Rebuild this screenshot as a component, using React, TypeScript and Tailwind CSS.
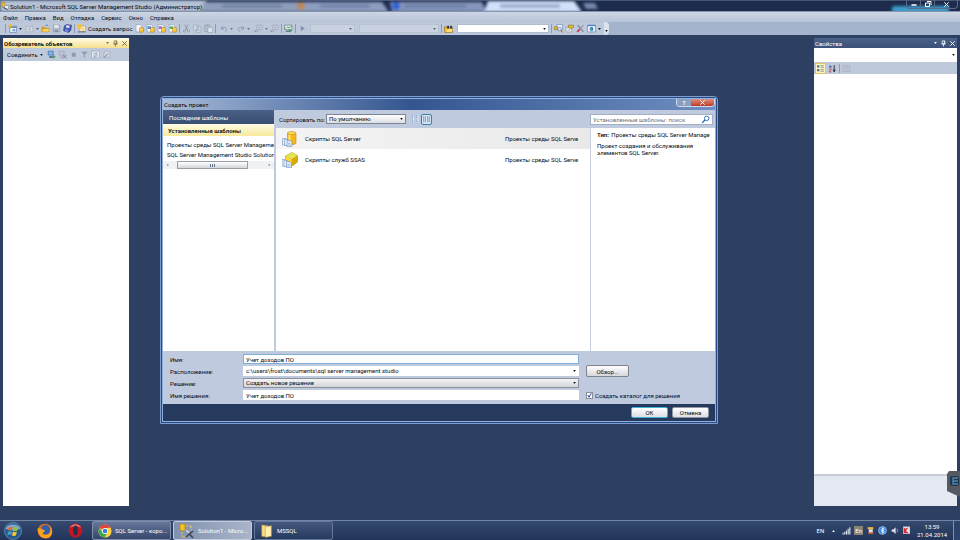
import React from 'react';
import clsx from 'clsx';

type IconProps = { children: React.ReactNode; className?: string };

const Icon = ({ children, className = 'size-[9px]' }: IconProps) => (
  <svg viewBox="0 0 16 16" className={clsx('shrink-0', className)} aria-hidden="true">
    {children}
  </svg>
);

const Caret = ({ className = 'text-slate-900' }: { className?: string }) => (
  <svg viewBox="0 0 4 3" className={clsx('h-[2px] w-[3px] shrink-0 fill-current', className)} aria-hidden="true">
    <path d="M0 0h4L2 3z" />
  </svg>
);

const ToolButton = ({ label, children, className }: { label: string; children: React.ReactNode; className?: string }) => (
  <button type="button" aria-label={label} className={clsx('flex shrink-0 items-center gap-[2px]', className)}>
    {children}
  </button>
);

const Separator = () => <span className="h-[9px] w-px shrink-0 bg-[#8d9ab2]" />;

const NewProject = () => (
  <Icon>
    <path d="M3 4h12v11H3z" fill="#e9f1fa" stroke="#4a6fa5" />
    <path d="M3 4h12v3H3z" fill="#5b88c4" />
    <path d="M4 0v8M0 4h8" stroke="#f0b429" strokeWidth="2" />
    <path d="M8 9h5v4H8z" fill="#7fa6d6" />
  </Icon>
);

const AddItem = () => (
  <Icon>
    <path d="M2 4h12v10H2z" fill="#d3dae5" stroke="#9aa5b6" />
    <path d="M5 7h6M5 10h6M8 5v8" stroke="#a8b2c2" />
  </Icon>
);

const FolderOpen = () => (
  <Icon>
    <path d="M1 5h5l2 2h5v7H1z" fill="#d89b1c" />
    <path d="M4 8h12l-3 6H1z" fill="#ffd45e" stroke="#a87511" strokeWidth=".8" />
    <path d="M8 3c2-2 4-1 5 1" fill="none" stroke="#3b69b2" strokeWidth="1.5" />
  </Icon>
);

const Floppy = () => (
  <Icon>
    <path d="M2 2h12v12H2z" fill="#b3bdcc" stroke="#8793a6" />
    <path d="M4 2h8v5H4z" fill="#e2e7ee" />
    <path d="M5 10h6v4H5z" fill="#8793a6" />
  </Icon>
);

const FloppyStack = () => (
  <Icon>
    <path d="M6 1l9 1-1 9-4 4-9-3 1-8z" fill="#4658b8" stroke="#27357f" />
    <path d="M6 2l6 1-1 4-6-1z" fill="#dfe5fa" />
    <path d="M4 9l5 1-1 4-4-1z" fill="#8694dc" />
  </Icon>
);

const QuerySheet = () => (
  <Icon>
    <path d="M5 4h10v9H5z" fill="#fff8d0" stroke="#c59a24" />
    <path d="M1 1c0-1 7-1 7 0v7c0 1-7 1-7 0z" fill="#f4c136" />
    <path d="M1 14h14" stroke="#6b7487" strokeWidth="2" />
    <path d="M9 8h4M9 11h4" stroke="#b79841" />
  </Icon>
);

const SqlDoc = ({ tint }: { tint: string }) => (
  <Icon>
    <path d="M2 1h7l3 3v10H2z" fill="#f7f9fd" stroke="#8190ab" />
    <path d="M3 4h6v5H3z" fill={tint} />
    <path d="M8 7c0-1 7-1 7 0v7c0 1-7 1-7 0z" fill="#f3c235" stroke="#a77912" strokeWidth=".8" />
    <path d="M9 9h5" stroke="#fff0aa" />
  </Icon>
);

const Scissors = () => (
  <Icon>
    <path d="M5 1l5 10M11 1L6 11" stroke="#7d899b" strokeWidth="1.3" />
    <circle cx="4.5" cy="12.5" r="2" fill="none" stroke="#7d899b" />
    <circle cx="11.5" cy="12.5" r="2" fill="none" stroke="#7d899b" />
  </Icon>
);

const CopyDocs = () => (
  <Icon>
    <path d="M1 2h8v9H1zM6 5h8v10H6z" fill="#d5dce7" stroke="#8f9bad" />
    <path d="M8 9h4M8 12h4" stroke="#8f9bad" />
  </Icon>
);

const PasteDocs = () => (
  <Icon>
    <path d="M1 2h10v11H1z" fill="#b4becd" stroke="#8f9bad" />
    <path d="M4 1h4v2H4z" fill="#8f9bad" />
    <path d="M7 6h8v9H7z" fill="#dfe5ee" stroke="#8f9bad" />
  </Icon>
);

const Undo = ({ flip = false }: { flip?: boolean }) => (
  <Icon className={clsx('size-2', flip && '-scale-x-100')}>
    <path d="M3 3v5h5M3 8c3-6 10-4 10 1 0 2-2 4-4 5" fill="none" stroke="#8793a7" strokeWidth="1.7" />
  </Icon>
);

const NavDoc = () => (
  <Icon>
    <path d="M5 2h9v8H5z" fill="#d5dce7" stroke="#8793a7" />
    <path d="M7 5h5M7 7h5M8 13H1m3-3l-3 3 3 2" fill="none" stroke="#8793a7" strokeWidth="1.2" />
  </Icon>
);

const Monitor = () => (
  <Icon>
    <path d="M1 2h13v8H1z" fill="#e5f2e9" stroke="#4b5d74" />
    <path d="M3 8l3-3 3 2 4-3" fill="none" stroke="#2d9b48" strokeWidth="1.5" />
    <path d="M3 12h8v2H3z" fill="#596a80" />
    <path d="M9 9l6 3-6 3z" fill="#35a147" />
  </Icon>
);

const FindFolder = () => (
  <Icon>
    <path d="M1 5h5l1 2h8v8H1z" fill="#f1bc39" stroke="#8b640f" />
    <path d="M6 3h3v5H5zM11 3h3l1 5h-4z" fill="#303744" />
    <path d="M4 14l3-5h9l-3 5z" fill="#ffdd78" />
  </Icon>
);

const ServerSearch = () => (
  <Icon>
    <path d="M5 1h10v9H5z" fill="#e8f2ff" stroke="#5e7fb2" />
    <path d="M1 5h6v5H1z" fill="#edb52d" stroke="#a07516" />
    <circle cx="10" cy="9" r="3" fill="#d8ecff" stroke="#557099" />
    <path d="M12 11l3 4" stroke="#a97625" strokeWidth="2" />
  </Icon>
);

const HandSheet = () => (
  <Icon>
    <path d="M2 6h9v8H2z" fill="#fff" stroke="#77849b" />
    <path d="M4 9h5M4 11h5" stroke="#77849b" />
    <path d="M6 2h9v4l-5 2-4-2z" fill="#efb92e" stroke="#8a650d" />
  </Icon>
);

const Tools = () => (
  <Icon>
    <path d="M3 2l10 12" stroke="#77849b" strokeWidth="2" />
    <path d="M13 2L7 9" stroke="#8d98aa" strokeWidth="2" />
    <path d="M7 9l-5 5" stroke="#cf3940" strokeWidth="3" />
  </Icon>
);

const WebWindow = () => (
  <Icon>
    <path d="M1 2h14v12H1z" fill="#f5fbff" stroke="#456ca6" />
    <path d="M1 2h14v2H1z" fill="#4b7fc8" />
    <circle cx="8" cy="9" r="3.5" fill="#2f7cc7" />
    <path d="M6 8h3v3H7z" fill="#6bc157" />
  </Icon>
);

const Pin = () => (
  <Icon className="size-[7px]">
    <path d="M5 2h6v7H5zM3 9h10M8 9v6M10 2v7" fill="none" stroke="currentColor" strokeWidth="1.7" />
  </Icon>
);

const Close = ({ className = 'size-[7px]' }: { className?: string }) => (
  <Icon className={className}>
    <path d="M3 3l10 10M13 3L3 13" stroke="currentColor" strokeWidth="2.2" />
  </Icon>
);

const Plug = ({ muted = false }: { muted?: boolean }) => (
  <Icon>
    <path d="M2 2h9v7H2z" fill={muted ? '#bdc6d4' : '#7fb2e8'} stroke={muted ? '#919cad' : '#315e9a'} />
    <path d="M4 11h6v3H4z" fill={muted ? '#a5afbf' : '#4b638b'} />
    <path d={muted ? 'M9 9l6 6M15 9l-6 6' : 'M9 12h6M12 9v6'} stroke={muted ? '#8a95a6' : '#2f9b45'} strokeWidth="1.8" />
  </Icon>
);

const Magnifier = () => (
  <Icon>
    <circle cx="10" cy="6" r="4" fill="none" stroke="#2369ae" strokeWidth="1.6" />
    <path d="M7 9l-5 5" stroke="#2369ae" strokeWidth="2.2" />
  </Icon>
);

const CylinderScript = () => (
  <svg viewBox="0 0 32 32" className="size-4 shrink-0" aria-hidden="true">
    <path d="M11 4v20c0 4 17 4 17 0V4z" fill="#f5b816" stroke="#b57808" />
    <path d="M15 7v20" stroke="#ffe37b" strokeWidth="4" />
    <ellipse cx="19.5" cy="4" rx="8.5" ry="3" fill="#ffdf62" stroke="#b57808" />
    <path d="M1 15h7l3 3v10H1z" fill="#e4eefc" stroke="#5f82b5" />
    <path d="M5 17h7l3 3v9H5z" fill="#e4eefc" stroke="#5f82b5" />
    <path d="M10 19h7l3 3v9H10z" fill="#dfeaff" stroke="#5879ad" />
    <path d="M12 25h5M12 28h6" stroke="#7b98c5" />
  </svg>
);

const CubeScript = () => (
  <svg viewBox="0 0 32 32" className="size-4 shrink-0" aria-hidden="true">
    <path d="M7 8l13-7 11 6v13l-12 9-12-8z" fill="#d9a909" stroke="#9c790b" />
    <path d="M7 8l13-7 11 6-12 7z" fill="#e2e652" />
    <path d="M7 8l12 6v14L7 21z" fill="#ffd837" />
    <path d="M0 15h7l3 3v10H0z" fill="#e4eefc" stroke="#5f82b5" />
    <path d="M4 17h7l3 3v9H4z" fill="#e4eefc" stroke="#5f82b5" />
    <path d="M9 19h7l3 3v9H9z" fill="#dfeaff" stroke="#5879ad" />
    <path d="M11 25h5M11 28h6" stroke="#7b98c5" />
  </svg>
);

const Combo = ({ label, value, className, id }: { label?: string; value: string; className?: string; id?: string }) => (
  <span className={clsx('grid shrink-0 items-center', className)}>
    <select
      id={id}
      aria-label={label}
      className="col-start-1 row-start-1 h-full w-full min-w-0 appearance-none bg-transparent px-[2px] leading-[8px] outline-none"
    >
      <option>{value}</option>
    </select>
    <span className="pointer-events-none col-start-1 row-start-1 mr-[2px] flex justify-self-end">
      <Caret />
    </span>
  </span>
);

const TitleBar = () => (
  <header className="relative flex h-3 items-center overflow-hidden bg-[#1d2b4d]">
    <svg viewBox="0 0 960 12" preserveAspectRatio="none" className="absolute inset-0 size-full" aria-hidden="true">
      <defs>
        <filter id="glass" x="-5%" y="-50%" width="110%" height="200%">
          <feGaussianBlur stdDeviation="1.6" />
        </filter>
      </defs>
      <g filter="url(#glass)">
        <path d="M0 0h206v12H0z" fill="#b4c1d5" />
        <path d="M204 2h100l6 10H200z" fill="#8e9dba" />
        <path d="M302 2h80l7 10h-80z" fill="#8d9dbf" />
        <path d="M390 2h92l4 10h-94z" fill="#8696bb" />
        <path d="M488 1h86l8 11h-98z" fill="#d3e0f9" />
        <path d="M222 6h60M320 6h50M404 6h62M500 6h60" stroke="#53678f" strokeWidth="3" opacity=".55" />
        <circle cx="301" cy="6" r="4" fill="#b98a55" />
        <circle cx="396" cy="6" r="4" fill="#2e62d8" />
        <path d="M583 3h12l3 6h-12z" fill="#7588aa" />
        <path d="M893 6h56v7h-58z" fill="#3d9cc9" />
      </g>
      <path d="M0 11.5h960" stroke="#8595ad" />
      <path d="M0 .5h960" stroke="#65738e" strokeWidth=".6" />
    </svg>
    <Icon className="relative ml-px size-2">
      <path d="M2 1h6v9H2z" fill="#edc33c" stroke="#9c7921" />
      <path d="M7 7h8v7H7z" fill="#e8edf5" stroke="#6c7a92" />
      <path d="M5 11l8 4" stroke="#3f5270" strokeWidth="2" />
    </Icon>
    <h1 className="relative ml-px whitespace-nowrap text-black">
      Solution1 - Microsoft SQL Server Management Studio (Администратор)
    </h1>
    <div className="relative mr-[2px] ml-auto flex h-[9px] self-start rounded-b-sm border border-t-0 border-[#5c6a86] text-white">
      <button type="button" aria-label="Свернуть" className="flex w-3.5 items-center justify-center border-r border-[#5c6a86]">
        <Icon className="size-2"><path d="M3 10h10" stroke="#fff" strokeWidth="3" /></Icon>
      </button>
      <button type="button" aria-label="Восстановить" className="flex w-3.5 items-center justify-center border-r border-[#5c6a86]">
        <Icon className="size-2"><path d="M6 3h8v7M3 6h8v7H3z" fill="none" stroke="#fff" strokeWidth="2" /></Icon>
      </button>
      <button type="button" aria-label="Закрыть" className="flex w-[22px] items-center justify-center">
        <Close />
      </button>
    </div>
  </header>
);

const menu = ['Файл', 'Правка', 'Вид', 'Отладка', 'Сервис', 'Окно', 'Справка'];

const Toolbar = () => (
  <div className="flex h-[13px] bg-[#a5b4cd]">
    <div className="flex items-center gap-[2px] rounded-r-sm bg-[#bdc8db] pl-[5px]">
      <Separator />
      <ToolButton label="Создать проект"><NewProject /><Caret /></ToolButton>
      <ToolButton label="Добавить элемент" className="ml-px"><AddItem /><Caret className="text-slate-600" /></ToolButton>
      <ToolButton label="Открыть"><FolderOpen /></ToolButton>
      <ToolButton label="Сохранить"><Floppy /></ToolButton>
      <ToolButton label="Сохранить все"><FloppyStack /></ToolButton>
      <Separator />
      <button type="button" className="flex w-14 shrink-0 items-center gap-[2px] whitespace-nowrap">
        <QuerySheet />
        Создать запрос
      </button>
      <ToolButton label="Запрос ядра"><SqlDoc tint="#f7f9fd" /></ToolButton>
      <ToolButton label="Запрос MDX"><SqlDoc tint="#4c8bd6" /></ToolButton>
      <ToolButton label="Запрос DMX"><SqlDoc tint="#b06bc9" /></ToolButton>
      <ToolButton label="Запрос XMLA"><SqlDoc tint="#5bb06f" /></ToolButton>
      <Separator />
      <ToolButton label="Вырезать"><Scissors /></ToolButton>
      <ToolButton label="Копировать"><CopyDocs /></ToolButton>
      <ToolButton label="Вставить"><PasteDocs /></ToolButton>
      <Separator />
      <ToolButton label="Отменить" className="ml-[2px]"><Undo /><Caret className="text-slate-500" /></ToolButton>
      <ToolButton label="Повторить" className="ml-[2px]"><Undo flip /><Caret className="text-slate-500" /></ToolButton>
      <ToolButton label="Назад" className="ml-[2px]"><NavDoc /><Caret className="text-slate-500" /></ToolButton>
      <ToolButton label="Вперед"><NavDoc /></ToolButton>
      <Separator />
      <ToolButton label="Монитор активности"><Monitor /></ToolButton>
      <Separator />
      <ToolButton label="Запуск">
        <Icon><path d="M5 3l7 5-7 5z" fill="#8290a6" /></Icon>
      </ToolButton>
      <Combo label="Конфигурация" value="" className="ml-px h-[9px] w-[45px] border border-[#b2bfd1] bg-[#d2dae6] opacity-60" />
      <Combo label="Платформа" value="" className="ml-[2px] h-[9px] w-20 border border-[#b2bfd1] bg-[#d2dae6] opacity-60" />
      <Separator />
      <ToolButton label="Найти в файлах"><FindFolder /></ToolButton>
      <Combo label="Найти" value="" className="ml-[2px] h-[9px] w-[92px] border border-[#b0bccf] bg-white" />
      <Separator />
      <ToolButton label="Зарегистрированные серверы"><ServerSearch /></ToolButton>
      <ToolButton label="Окно свойств"><HandSheet /></ToolButton>
      <ToolButton label="Панель элементов"><Tools /></ToolButton>
      <ToolButton label="Веб-браузер"><WebWindow /><Caret /></ToolButton>
      <button type="button" aria-label="Параметры панели" className="ml-px flex h-full w-[5px] items-end justify-center rounded-r-sm bg-[#dbe2ee] pb-[3px]">
        <Caret />
      </button>
    </div>
  </div>
);

const ObjectExplorer = () => (
  <section className="flex w-[126px] shrink-0 flex-col bg-white">
    <div className="flex h-[10px] items-center gap-[2px] bg-linear-to-b from-[#fffbe2] to-[#f5e08c] pr-px pl-px text-[#75683e]">
      <h2 className="mr-auto font-semibold text-black">Обозреватель объектов</h2>
      <Caret className="mr-px" />
      <button type="button" aria-label="Закрепить"><Pin /></button>
      <button type="button" aria-label="Закрыть панель"><Close /></button>
    </div>
    <div className="flex h-[13px] items-center gap-[2px] bg-[#bfc9dc] pl-1">
      <button type="button" className="mr-[2px] flex items-center gap-[2px]">Соединить <Caret /></button>
      <ToolButton label="Подключить"><Plug /></ToolButton>
      <ToolButton label="Отключить"><Plug muted /></ToolButton>
      <ToolButton label="Остановить"><Icon><path d="M5 5h7v7H5z" fill="#8f9aac" /></Icon></ToolButton>
      <ToolButton label="Фильтр"><Icon><path d="M2 3h12L9 8v6l-2-2V8z" fill="#8f9aac" /></Icon></ToolButton>
      <ToolButton label="Обновить">
        <Icon>
          <path d="M1 2h14v12H1z" fill="#e7ebf2" stroke="#8f9aac" />
          <path d="M5 8V6h6M8 4l3 2-3 2M11 8v3H5m3-2l-3 2 3 2" fill="none" stroke="#7b8798" />
        </Icon>
      </ToolButton>
      <ToolButton label="Сценарий">
        <Icon>
          <path d="M5 2h9v11H3V8z" fill="#d2d9e4" stroke="#98a3b4" />
          <path d="M3 14l8-8" stroke="#8f9aac" strokeWidth="2" />
        </Icon>
      </ToolButton>
    </div>
  </section>
);

const Properties = () => (
  <section className="flex w-[143px] shrink-0 flex-col bg-white">
    <div className="flex h-[10px] items-center gap-[2px] bg-linear-to-b from-[#4d6288] to-[#3c5179] pr-px pl-px text-white">
      <h2 className="mr-auto">Свойства</h2>
      <Caret className="mr-px text-white" />
      <button type="button" aria-label="Закрепить свойства"><Pin /></button>
      <button type="button" aria-label="Закрыть свойства"><Close /></button>
    </div>
    <Combo label="Объект" value="" className="h-[14px] w-full bg-white" />
    <div className="flex h-3 items-center gap-[2px] bg-[#bfc9dc] pl-px">
      <button type="button" aria-label="По категориям" className="border border-[#e5c365] bg-[#fdf4bf]">
        <Icon>
          <path d="M2 2h4v4H2zM2 9h4v4H2z" fill="#4d6b9b" />
          <path d="M8 3h6M8 6h6M8 10h6M8 13h6" stroke="#4d5a70" />
        </Icon>
      </button>
      <ToolButton label="По алфавиту">
        <Icon>
          <path d="M2 7l2-5 2 5M3 5h3" fill="none" stroke="#2e5cb8" strokeWidth="1.3" />
          <path d="M2 9h4l-4 5h4" fill="none" stroke="#b83434" strokeWidth="1.3" />
          <path d="M11 2v11M9 10l2 4 2-4" fill="none" stroke="#222" strokeWidth="1.6" />
        </Icon>
      </ToolButton>
      <Separator />
      <ToolButton label="Страницы свойств">
        <Icon>
          <path d="M2 3h12v10H2z" fill="#c2cad7" stroke="#9ba6b7" />
          <path d="M5 6h6M5 9h6" stroke="#9ba6b7" />
        </Icon>
      </ToolButton>
    </div>
    <div className="flex-1" />
    <div className="h-8 border-t-2 border-[#c6cbd5] bg-[#e4e8f0]" />
  </section>
);

const templates = [
  { name: 'Скрипты SQL Server', icon: <CylinderScript />, selected: true },
  { name: 'Скрипты служб SSAS', icon: <CubeScript />, selected: false },
];

const inputClass = 'h-[10px] w-full min-w-0 border bg-white px-[2px] outline-none';

const NewProjectDialog = () => (
  <div
    role="dialog"
    aria-labelledby="dialog-title"
    className="absolute top-24 left-1/6 w-[558px] rounded-t-sm border border-[#7f9dcb] bg-[#27498a] p-px"
  >
    <div className="border border-[#8fafdc]">
      <div className="flex h-[11px] items-center bg-linear-to-r from-[#a9bcd9] via-[#34558f] via-45% to-[#6f8fc2] pl-px">
        <h2 id="dialog-title" className="text-black">Создать проект</h2>
        <div className="ml-auto flex h-2 self-start overflow-hidden rounded-b-sm border border-t-0 border-[#d3dced] text-white">
          <button type="button" aria-label="Справка" className="w-[14px] bg-[#8a9fc2] leading-[7px] font-bold">?</button>
          <button type="button" aria-label="Закрыть окно" className="flex w-[23px] items-center justify-center bg-linear-to-b from-[#dd8f83] to-[#bd3524]">
            <Close />
          </button>
        </div>
      </div>

      <div className="flex h-[241px] bg-[#bfcadf]">
        <nav className="w-[111px] shrink-0 overflow-hidden bg-white whitespace-nowrap">
          <button type="button" className="block h-[14px] w-full bg-linear-to-b from-[#4b6087] to-[#3a4d73] pl-[6px] text-left text-white">
            Последние шаблоны
          </button>
          <button type="button" className="block h-3 w-full bg-linear-to-b from-[#fffbe4] to-[#f8e99b] pl-[5px] text-left font-semibold">
            Установленные шаблоны
          </button>
          <div className="mt-[3px] flex flex-col pl-1">
            <button type="button" className="h-[10px] text-left">Проекты среды SQL Server Managemen</button>
            <button type="button" className="h-[10px] text-left">SQL Server Management Studio Solution</button>
          </div>
          <div className="mt-[2px] flex h-2 items-center justify-between bg-[#f0f1f4] px-[3px]">
            <span className="flex rotate-90"><Caret className="text-slate-500" /></span>
            <span className="mr-auto ml-2 flex h-2 w-[71px] items-center justify-center gap-px border border-[#9b9ea5] bg-linear-to-b from-white to-[#d5d7dc]">
              <i className="h-[3px] w-px bg-slate-500" />
              <i className="h-[3px] w-px bg-slate-500" />
              <i className="h-[3px] w-px bg-slate-500" />
            </span>
            <span className="flex -rotate-90"><Caret className="text-slate-500" /></span>
          </div>
        </nav>

        <div className="flex min-w-0 flex-1 flex-col pl-[2px]">
          <div className="flex h-[18px] shrink-0 items-center pr-[2px] pl-[3px]">
            <label htmlFor="sort" className="w-[47px] whitespace-nowrap">Сортировать по:</label>
            <Combo id="sort" value="По умолчанию" className="h-[10px] w-20 border border-[#7d8594] bg-linear-to-b from-white to-[#dcdee3]" />
            <button type="button" aria-label="Мелкие значки" className="ml-1">
              <Icon className="size-[10px]">
                <path d="M4 2v5M7 2v5M11 2v5M14 2v5M4 9v4M7 9v4M11 9v4M14 9v4" stroke="#8fa5cd" strokeWidth="1.3" />
                <path d="M5 2h2v11H5zM12 2h2v11h-2z" fill="#dfe7f5" />
              </Icon>
            </button>
            <button type="button" aria-label="Средние значки" className="ml-px rounded-xs border border-[#3d7fa3] bg-[#d7e6f5]">
              <Icon className="size-[9px]">
                <path d="M3 2v11M6 2v11M10 2v11M13 2v11" stroke="#6f8fd0" strokeWidth="1.5" />
              </Icon>
            </button>
            <div className="ml-auto flex h-[11px] w-[123px] items-center border border-[#a2afc4] bg-white pr-[2px]">
              <input
                aria-label="Поиск шаблонов"
                placeholder="Установленные шаблоны: поиск"
                className="min-w-0 flex-1 px-[2px] outline-none placeholder:text-[#6e7480]"
              />
              <Magnifier />
            </div>
          </div>

          <div className="flex min-h-0 flex-1 bg-white">
            <ul className="flex-1">
              {templates.map(t => (
                <li key={t.name}>
                  <button
                    type="button"
                    className={clsx(
                      'flex h-[21px] w-full items-center pr-3 pl-[6px]',
                      t.selected && 'bg-linear-to-r from-[#f4f4f4] to-[#e9e9e9]'
                    )}
                  >
                    {t.icon}
                    <span className="ml-[7px]">{t.name}</span>
                    <span className="ml-auto w-[73px] text-left whitespace-nowrap">Проекты среды SQL Serve</span>
                  </button>
                </li>
              ))}
            </ul>
            <div className="w-[125px] shrink-0 border-l border-[#c6cddc] pt-[2px] pl-[6px]">
              <p className="leading-[9px] whitespace-nowrap">
                <b className="mr-px font-semibold">Тип:</b> Проекты среды SQL Server Manage
              </p>
              <p className="mt-[3px] w-[105px] leading-[7px]">Проект создания и обслуживания элементов SQL Server.</p>
            </div>
          </div>
        </div>
      </div>

      <form className="grid grid-cols-[73px_336px_1fr] items-center gap-y-[2px] bg-[#bfcadf] pt-[3px] pb-1 pl-[7px]">
        <label htmlFor="name">Имя:</label>
        <input id="name" defaultValue="Учет доходов ПО" className={clsx(inputClass, 'border-[#7eb0d8]')} />
        <span />
        <label htmlFor="location">Расположение:</label>
        <Combo id="location" value="c:\users\frost\documents\sql server management studio" className="h-[10px] w-full border border-white bg-white" />
        <button type="button" className="-my-px ml-[7px] h-3 w-[43px] rounded-xs border border-[#7c818b] bg-linear-to-b from-white to-[#d5d7dc]">
          Обзор...
        </button>
        <label htmlFor="solution">Решение:</label>
        <Combo id="solution" value="Создать новое решение" className="h-[10px] w-full border border-[#8c929d] bg-linear-to-b from-[#f4f4f5] to-[#d3d5d9]" />
        <span />
        <label htmlFor="solution-name">Имя решения:</label>
        <input id="solution-name" defaultValue="Учет доходов ПО" className={clsx(inputClass, 'border-white')} />
        <label className="ml-[7px] flex items-center gap-[2px] whitespace-nowrap">
          <span className="grid">
            <input type="checkbox" defaultChecked className="peer col-start-1 row-start-1 size-[7px] appearance-none border border-[#8890a0] bg-white" />
            <Icon className="pointer-events-none invisible col-start-1 row-start-1 size-[7px] peer-checked:visible">
              <path d="M4 7l3 5 5-9" fill="none" stroke="#22398f" strokeWidth="2.2" />
            </Icon>
          </span>
          Создать каталог для решения
        </label>
      </form>

      <div className="flex h-[17px] items-center justify-end gap-1 bg-[#263a5e] pr-[6px]">
        <button type="button" className="h-[11px] w-[37px] rounded-xs border border-[#3fb3d3] bg-linear-to-b from-white to-[#dcdfe4]">ОК</button>
        <button type="button" className="h-[11px] w-[37px] rounded-xs border border-[#9196a0] bg-linear-to-b from-white to-[#dcdfe4]">Отмена</button>
      </div>
    </div>
  </div>
);

const StartOrb = () => (
  <svg viewBox="0 0 32 32" className="size-[18px]" aria-hidden="true">
    <circle cx="16" cy="16" r="15" fill="#245a8c" stroke="#8ab4d3" />
    <path d="M3 12C6 2 26 2 29 12 20 16 12 16 3 12z" fill="#a8c9df" opacity=".7" />
    <path d="M8 10c3-2 5-2 7-1l-1 6c-2-1-5-1-7 1z" fill="#ef6a32" />
    <path d="M17 9c3 1 5 1 8 0l-2 7c-3 1-5 0-7-1z" fill="#8bc53f" />
    <path d="M7 18c2-2 5-2 7-1l-1 6c-2-1-5-1-7 1z" fill="#3fa2e3" />
    <path d="M16 17c2 1 4 2 7 1l-2 6c-2 1-5 1-7 0z" fill="#fcc72e" />
  </svg>
);

const Firefox = () => (
  <Icon className="size-4">
    <circle cx="8" cy="8" r="7.3" fill="#e66a17" />
    <circle cx="8.5" cy="6.8" r="4.8" fill="#2e5fae" />
    <path d="M1 5c2 1 3 0 4 1s3 1 3 2-3 1-2 3c2 2 6 1 7-2 1-2 0-4-1-6 4 3 4 8 1 11-4 3-9 1-11-3C1 9 0 7 1 5z" fill="#f9a11f" />
  </Icon>
);

const Opera = () => (
  <Icon className="size-[15px]">
    <ellipse cx="8" cy="8" rx="7.2" ry="7.6" fill="#c91420" />
    <path d="M2 5C4 0 12 0 14 5 10 3 6 3 2 5z" fill="#ef7a78" />
    <ellipse cx="8" cy="8" rx="2.5" ry="5.3" fill="#25304c" />
  </Icon>
);

const Chrome = () => (
  <Icon className="size-[14px]">
    <circle cx="8" cy="8" r="7.5" fill="#ffd23d" />
    <path d="M8 8L1.5 4.2A7.5 7.5 0 0 1 14.6 4.4L8 4.5z" fill="#dd4338" />
    <path d="M1.5 4.2A7.5 7.5 0 0 0 7.5 15.5L11 9.5 8 11.5 5 9.5z" fill="#3aa757" />
    <circle cx="8" cy="8" r="3.5" fill="#fff" />
    <circle cx="8" cy="8" r="2.7" fill="#3b7ddd" />
  </Icon>
);

const Studio = () => (
  <Icon className="size-4">
    <path d="M1 1v6c0 1 5 1 5 0V1z" fill="#f0c02d" stroke="#a67c14" strokeWidth=".5" />
    <path d="M7 3h5M12 3v4M3 9v5h3" fill="none" stroke="#e9c74c" strokeWidth="1" strokeDasharray="2 1" />
    <path d="M7 7l7 8M14 8l-7 6" stroke="#3d4857" strokeWidth="1.6" />
    <path d="M7 7l3 3" stroke="#e6eaf0" strokeWidth="1.5" />
  </Icon>
);

const FolderIcon = () => (
  <Icon className="size-[14px]">
    <path d="M2 1l7 1v13l-7-1z" fill="#f6dc86" stroke="#b5913a" strokeWidth=".6" />
    <path d="M6 3l7-1v12l-7 1z" fill="#ffeeb0" stroke="#b5913a" strokeWidth=".6" />
  </Icon>
);

const tasks = [
  { title: 'SQL Server - коро...', icon: <Chrome />, style: 'border-[#7f8dab] bg-linear-to-b from-[#66779a] to-[#35476c]' },
  { title: 'Solution1 - Micro...', icon: <Studio />, style: 'border-[#c2cbdc] bg-linear-to-r from-[#8190ae] to-[#aab5cb]' },
  { title: 'MSSQL', icon: <FolderIcon />, style: 'border-[#68789a] bg-linear-to-b from-[#44577c] to-[#273a60]' },
];

const Taskbar = () => (
  <footer className="flex h-5 shrink-0 items-center border-t border-[#7284a5] bg-linear-to-b from-[#354a70] to-[#22345a] text-white">
    <button type="button" aria-label="Пуск" className="ml-1"><StartOrb /></button>
    <button type="button" aria-label="Firefox" className="ml-[15px]"><Firefox /></button>
    <button type="button" aria-label="Opera" className="ml-[15px]"><Opera /></button>
    <div className="ml-[9px] flex gap-[2px]">
      {tasks.map(task => (
        <button
          key={task.title}
          type="button"
          className={clsx('flex h-[19px] w-[79px] items-center gap-[3px] rounded-xs border pl-[5px] whitespace-nowrap', task.style)}
        >
          {task.icon}
          {task.title}
        </button>
      ))}
    </div>
    <div className="ml-auto flex items-center gap-[3px]">
      <span className="mr-[5px]">EN</span>
      <button type="button" aria-label="Скрытые значки" className="mr-1 flex rotate-180"><Caret className="text-white" /></button>
      <Icon><path d="M2 15v-3M5 15v-5M8 15V8M11 15V5M14 15V2" stroke="#dfe5ef" strokeWidth="2" /></Icon>
      <span className="flex h-[9px] items-center bg-[#8a8474] px-px">En</span>
      <Icon>
        <path d="M3 2h10v4H3z" fill="#f0b53c" />
        <path d="M5 6h7v6H5z" fill="#dfe6f2" />
        <path d="M4 11h9v3H4z" fill="#db6c32" />
      </Icon>
      <Icon>
        <circle cx="8" cy="8" r="7" fill="#2e86e0" stroke="#d4e8ff" />
        <path d="M8 3v10l3-3-6-4M8 3l3 3-6 4" fill="none" stroke="#fff" strokeWidth="1.4" />
      </Icon>
      <Icon>
        <path d="M3 6h3l4-4v12l-4-4H3z" fill="#dfe5ef" />
        <path d="M12 5c2 2 2 4 0 6" fill="none" stroke="#dfe5ef" />
      </Icon>
      <Icon>
        <path d="M2 1h12v13H2z" fill="#ece9ee" />
        <path d="M3 2l3 3 6-3-5 7 6 4H3z" fill="#d82d32" />
      </Icon>
    </div>
    <time className="mx-[6px] w-[30px] text-center leading-2">13:59<br />21.04.2014</time>
    <button type="button" aria-label="Свернуть все окна" className="h-full w-[7px] border-l border-[#7f91b2] bg-[#2f446c]" />
  </footer>
);

export default function App() {
  return (
    <div className="relative flex min-h-screen flex-col overflow-hidden bg-[#2e4062] font-[Roboto,'Noto_Sans',sans-serif] text-[6px] leading-[9px] text-[#080a10]">
      <TitleBar />
      <nav className="flex h-[10px] items-center gap-[7px] bg-linear-to-b from-[#ccd5e4] to-[#b7c3d8] pl-[3px]">
        {menu.map(item => (
          <button key={item} type="button">{item}</button>
        ))}
      </nav>
      <Toolbar />
      <main className="mb-[14px] flex flex-1 justify-between px-[3px] pt-[3px]">
        <ObjectExplorer />
        <Properties />
      </main>
      <NewProjectDialog />
      <button type="button" aria-label="Боковая панель" className="absolute right-0 bottom-[43px]">
        <svg viewBox="0 0 13 26" className="h-[26px] w-[13px]" aria-hidden="true">
          <path d="M2 0h11v26L0 20V3z" fill="#555961" />
          <rect x="3" y="5" width="9" height="10" rx="2" fill="#253548" />
          <path d="M11 7H6v6h5M6 10h5" fill="none" stroke="#4a86b8" strokeWidth="1.4" />
        </svg>
      </button>
      <Taskbar />
    </div>
  );
}
